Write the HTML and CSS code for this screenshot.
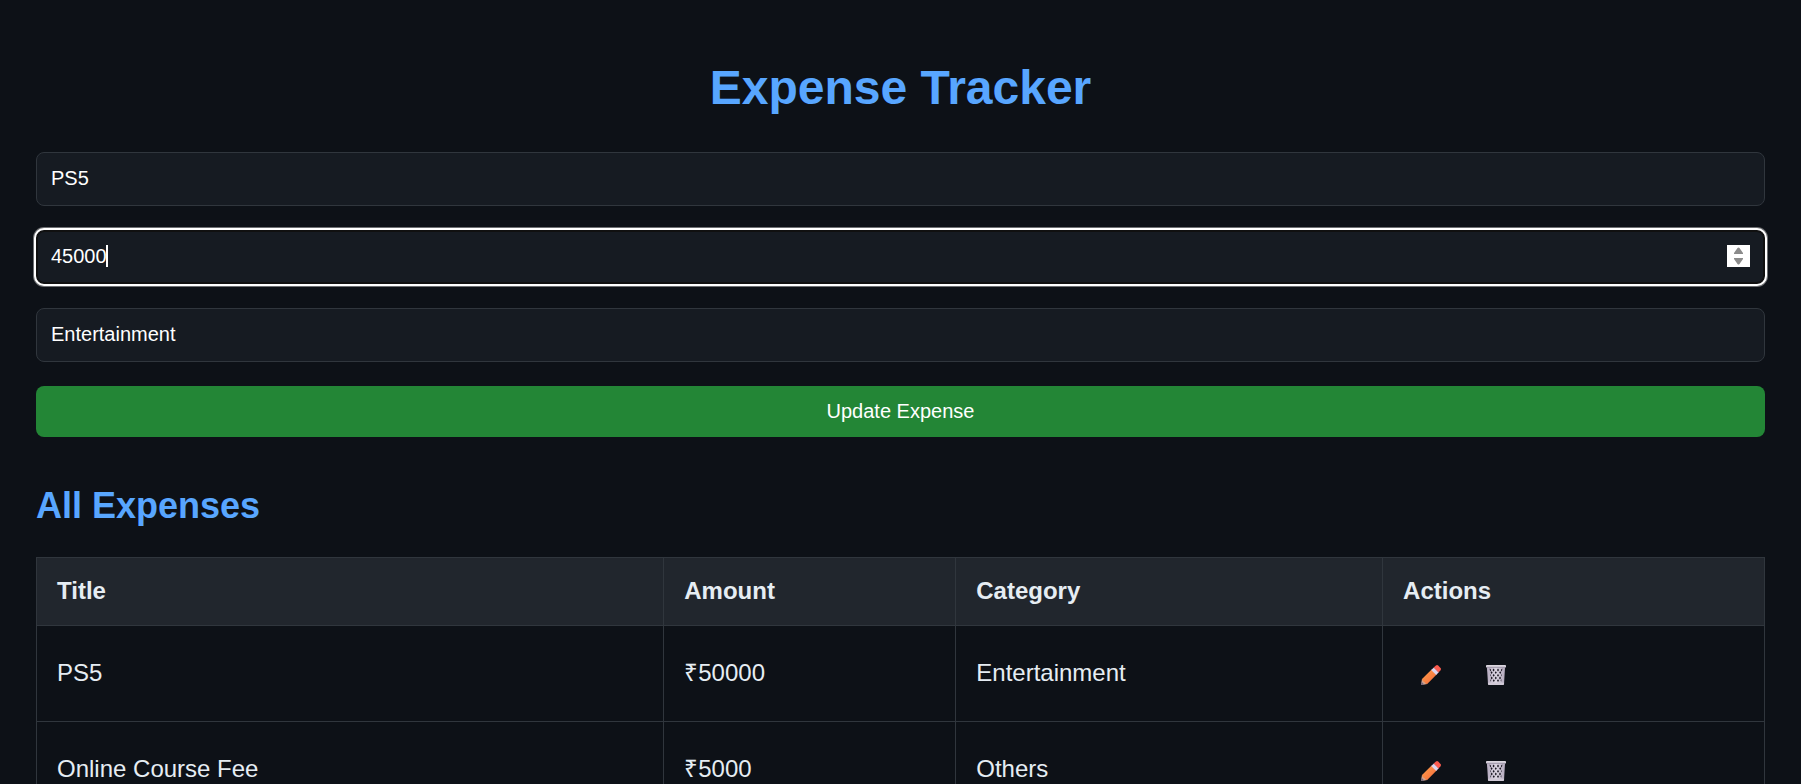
FILE: index.html
```
<!DOCTYPE html>
<html lang="en">
<head>
<meta charset="utf-8">
<meta name="viewport" content="width=device-width, initial-scale=1">
<title>Expense Tracker</title>
<link rel="stylesheet" href="styles.css">
</head>
<body>
<svg class="sprite" aria-hidden="true">
  <defs>
    <linearGradient id="wood" x1="0" y1="0" x2="1" y2="1">
      <stop offset="0" stop-color="#ffa04a"/>
      <stop offset="1" stop-color="#f4683c"/>
    </linearGradient>
    <linearGradient id="metal" x1="0" y1="0" x2="1" y2="0">
      <stop offset="0" stop-color="#b4aabf"/>
      <stop offset="0.5" stop-color="#dcd6e2"/>
      <stop offset="1" stop-color="#b1a7bb"/>
    </linearGradient>
    <symbol id="pencil" viewBox="0 0 20 20">
      <path d="M1 13.8 6.2 19 1.2 19.9Q0 20.1.1 19Z" fill="#d3a48c"/>
      <path d="M.5 16.8 3.2 19.5 1.2 19.9Q0 20.1.1 19Z" fill="#75667b"/>
      <path d="M1 13.9 10.6 4.6 15.6 9.5 6.2 19Q4.2 19 3.6 17.2 1.2 16.6 1 13.9Z" fill="url(#wood)"/>
      <path d="M10.2 5 12.9 2.4 17.8 7.2 15.2 9.9Z" fill="#dcd4ec"/>
      <path d="M12.7 2.6 14.9.6Q16.1-.4 17.2.6L19.5 2.9Q20.5 4 19.5 5.2L17.5 7.4Z" fill="#fb5b4f"/>
    </symbol>
    <symbol id="trash" viewBox="0 0 20 20">
      <path d="M.9 2h18.2l-1.1 17q-.1 1-1.1 1H3.1q-1 0-1.1-1z" fill="url(#metal)"/>
      <g fill="#17151f">
        <path d="M3.6 3.6l1.2.6.2 2.2-1.1-1zM7.6 3.6l1 1.4-1 1.4-1-1.4zM12 3.6l1 1.4-1 1.4-1-1.4zM16.4 3.6l-1.2.6-.2 2.2 1.1-1z"/>
        <path d="M5.6 6.2l1 1.4-1 1.4-1-1.4zM9.8 6.2l1 1.4-1 1.4-1-1.4zM14.2 6.2l1 1.4-1 1.4-1-1.4z"/>
        <path d="M3.9 8.8l.9 1.4-.5 1.4zM7.7 8.9l1 1.4-1 1.4-1-1.4zM12 8.9l1 1.4-1 1.4-1-1.4zM15.9 8.8l-.9 1.4.5 1.4z"/>
        <path d="M5.7 11.6l1 1.4-1 1.4-1-1.4zM9.8 11.6l1 1.4-1 1.4-1-1.4zM14 11.6l1 1.4-1 1.4-1-1.4z"/>
        <path d="M7.8 14.2l1 1.4-1 1.4-1-1.4zM12 14.2l1 1.4-1 1.4-1-1.4zM4.3 14l.9 1.4-.6 1.4zM15.5 14l-.9 1.4.6 1.4z"/>
      </g>
      <path d="M1.9 17.7h16.2L18 19q-.1 1-1.1 1H3.1q-1 0-1.1-1z" fill="#d0c9d6"/>
      <rect y="0" width="20" height="2.6" rx=".8" fill="#dbd6df"/>
      <rect x=".8" y="1.8" width="18.4" height=".9" fill="#938a9e"/>
    </symbol>
  </defs>
</svg>
<main class="page">
  <h1 class="title">Expense Tracker</h1>
  <form class="form">
    <input class="field" type="text" name="title" aria-label="Title" value="PS5">
    <div class="amount">
      <input class="field field-amount" type="number" name="amount" aria-label="Amount" value="45000" autofocus>
      <span class="caret"></span>
    </div>
    <input class="field" type="text" name="category" aria-label="Category" value="Entertainment">
    <button class="submit" type="submit">Update Expense</button>
  </form>
  <h2 class="subtitle">All Expenses</h2>
  <table class="expenses">
    <thead>
      <tr>
        <th class="col-title">Title</th>
        <th class="col-amount">Amount</th>
        <th class="col-category">Category</th>
        <th>Actions</th>
      </tr>
    </thead>
    <tbody>
      <tr>
        <td>PS5</td>
        <td>₹50000</td>
        <td>Entertainment</td>
        <td>
          <div class="actions">
            <button class="icon-button" type="button" aria-label="Edit PS5"><svg class="icon"><use href="#pencil"/></svg></button>
            <button class="icon-button" type="button" aria-label="Delete PS5"><svg class="icon"><use href="#trash"/></svg></button>
          </div>
        </td>
      </tr>
      <tr>
        <td>Online Course Fee</td>
        <td>₹5000</td>
        <td>Others</td>
        <td>
          <div class="actions">
            <button class="icon-button" type="button" aria-label="Edit Online Course Fee"><svg class="icon"><use href="#pencil"/></svg></button>
            <button class="icon-button" type="button" aria-label="Delete Online Course Fee"><svg class="icon"><use href="#trash"/></svg></button>
          </div>
        </td>
      </tr>
    </tbody>
  </table>
</main>
</body>
</html>
```
FILE: styles.css
```
* {
  box-sizing: border-box;
}

html {
  background: #0d1117;
  scrollbar-width: none;
}

body {
  margin: 0;
  color: #e6edf3;
  font-family: "Liberation Sans", Arial, sans-serif;
  font-size: 24px;
}

.sprite {
  position: absolute;
  width: 0;
  height: 0;
}

.page {
  padding: 60px 36px 36px;
}

.title {
  margin: 0 0 36px;
  color: #58a6ff;
  font-size: 48px;
  line-height: 56px;
  text-align: center;
}

.form {
  display: flex;
  flex-direction: column;
  gap: 24px;
}

.field {
  display: block;
  width: 100%;
  height: 54px;
  padding: 0 14px 2px;
  border: 1px solid #30363d;
  border-radius: 8px;
  background: #161b22;
  color: #fff;
  font-family: inherit;
  font-size: 20px;
}

.amount {
  position: relative;
}

.field-amount,
.field-amount:focus {
  border-color: #101010;
  outline: 2px solid #fff;
  outline-offset: 0;
  box-shadow: inset 0 0 0 1px #101010, 0 0 0 3px #6e7073;
  caret-color: transparent;
}

.field-amount::-webkit-inner-spin-button {
  appearance: none;
  width: 23px;
  height: 22px;
  background: #fff url("data:image/svg+xml,%3Csvg xmlns='http://www.w3.org/2000/svg' width='23' height='22'%3E%3Cpath d='M7 9V8l3.5-5q1-1.2 2 0L16 8v1zM7 13v1l3.5 5q1 1.2 2 0L16 14v-1z' fill='%238b8b8b'/%3E%3C/svg%3E") no-repeat;
  opacity: 1;
}

/* Text cursor at the end of the amount */
.caret {
  position: absolute;
  top: 15px;
  left: 70px;
  width: 2px;
  height: 22px;
  background: #fff;
}

.submit {
  padding: 14px;
  border: 0;
  border-radius: 8px;
  background: #238636;
  color: #fff;
  font-family: inherit;
  font-size: 20px;
  line-height: 23px;
}

.subtitle {
  margin: 48px 0 30px;
  color: #58a6ff;
  font-size: 36px;
  line-height: 42px;
}

.expenses {
  width: 100%;
  border-collapse: collapse;
  table-layout: fixed;
}

.expenses th,
.expenses td {
  padding: 19px 20px 21px;
  border: 1px solid #30363d;
  line-height: 27px;
  text-align: left;
}

.expenses th {
  background: #21262d;
}

.col-title {
  width: 36.3%;
}

.col-amount {
  width: 16.9%;
}

.col-category {
  width: 24.7%;
}

.actions {
  display: flex;
  gap: 9px;
}

.icon-button {
  display: flex;
  padding: 20px 18px 15px;
  border: 0;
  background: none;
}

.icon {
  width: 20px;
  height: 20px;
}
```
